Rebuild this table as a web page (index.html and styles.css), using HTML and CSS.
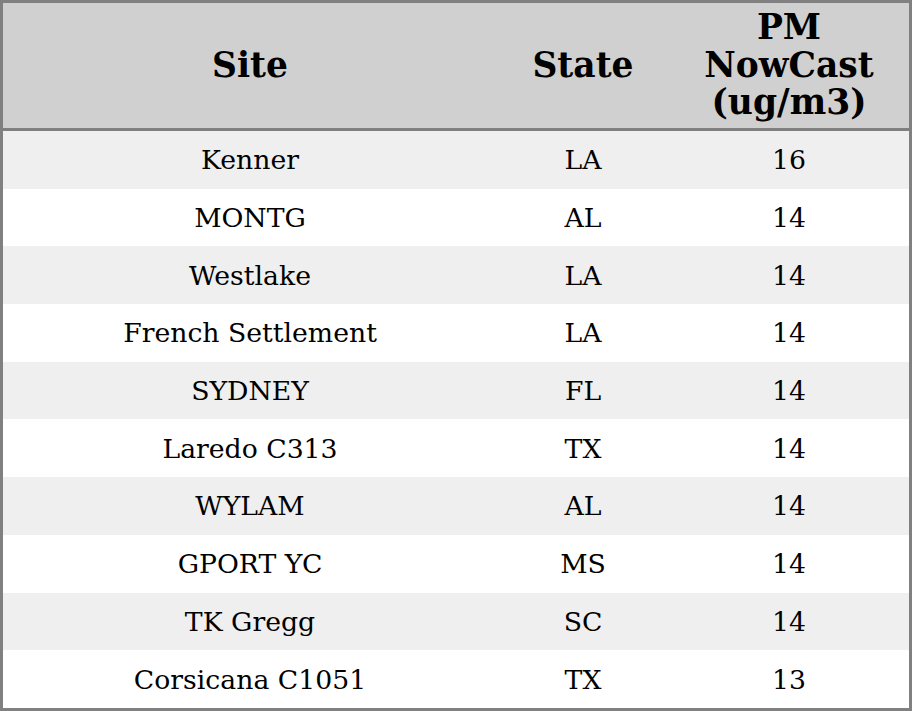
FILE: index.html
```html
<!DOCTYPE html>
<html>
<head>
<meta charset="utf-8">
<link rel="stylesheet" href="styles.css">
</head>
<body>
<table class="grid">
  <colgroup>
    <col class="c-site">
    <col class="c-state">
    <col class="c-pm">
  </colgroup>
  <thead>
    <tr class="head-row">
      <th>Site</th>
      <th>State</th>
      <th>PM<br>NowCast<br>(ug/m3)</th>
    </tr>
  </thead>
  <tbody>
    <tr><td>Kenner</td><td>LA</td><td>16</td></tr>
    <tr><td>MONTG</td><td>AL</td><td>14</td></tr>
    <tr><td>Westlake</td><td>LA</td><td>14</td></tr>
    <tr><td>French Settlement</td><td>LA</td><td>14</td></tr>
    <tr><td>SYDNEY</td><td>FL</td><td>14</td></tr>
    <tr><td>Laredo C313</td><td>TX</td><td>14</td></tr>
    <tr><td>WYLAM</td><td>AL</td><td>14</td></tr>
    <tr><td>GPORT YC</td><td>MS</td><td>14</td></tr>
    <tr><td>TK Gregg</td><td>SC</td><td>14</td></tr>
    <tr><td>Corsicana C1051</td><td>TX</td><td>13</td></tr>
  </tbody>
</table>
</body>
</html>
```
FILE: styles.css
```css
html, body {
  margin: 0;
  padding: 0;
  background: #ffffff;
}
.grid {
  width: 912px;
  height: 711px;
  border-collapse: separate;
  border-spacing: 0;
  border: 3px solid #808080;
  table-layout: fixed;
  font-family: "DejaVu Serif", serif;
  color: #000;
}
.c-site { width: 494px; }
.c-state { width: 172px; }
.c-pm { width: 240px; }
.grid th {
  background: #d0d0d0;
  font-size: 34.5px;
  font-weight: bold;
  text-align: center;
  vertical-align: middle;
  padding: 0;
  height: 125px;
  border-bottom: 3px solid #808080;
  line-height: 37.5px;
}
.grid td {
  font-size: 26.7px;
  text-align: center;
  vertical-align: middle;
  padding: 0;
  height: 57.7px;
}
.grid tbody tr:nth-child(odd) td {
  background: #efefef;
}
.grid tbody tr:nth-child(even) td {
  background: #ffffff;
}
```
